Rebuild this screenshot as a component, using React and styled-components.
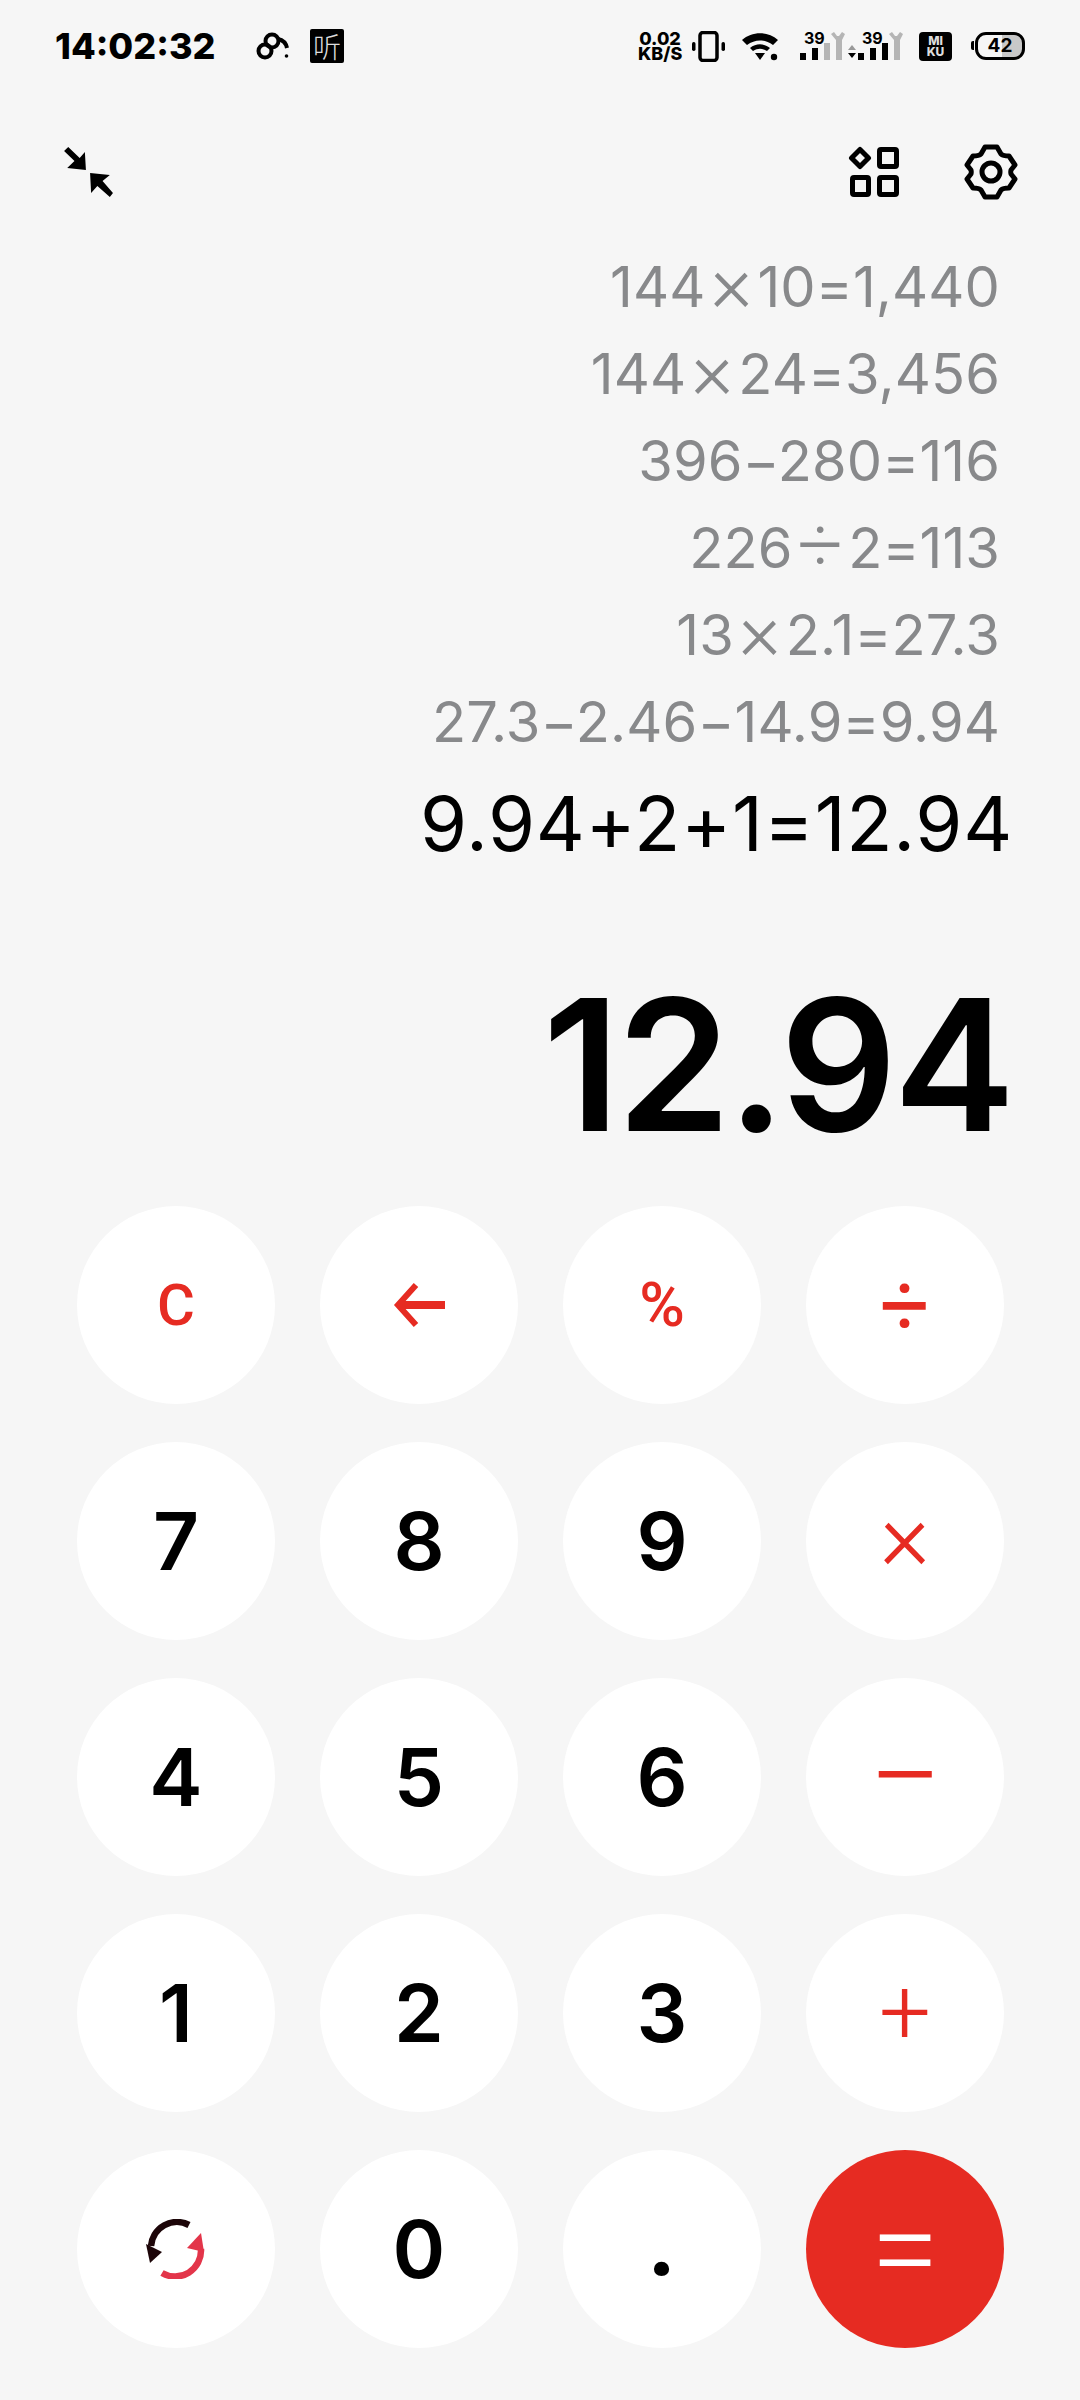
import styled, { createGlobalStyle } from "styled-components";

const RED = "#e62b22";

const GlobalStyle = createGlobalStyle`
  html, body {
    margin: 0;
    padding: 0;
    background: #f6f6f6;
  }
  body {
    font-family: "Inter", "Liberation Sans", sans-serif;
  }
`;

const history = [
  ["144", "×", "10=1,440"],
  ["144", "×", "24=3,456"],
  ["396−280=116"],
  ["226", "÷", "2=113"],
  ["13", "×", "2.1=27.3"],
  ["27.3−2.46−14.9=9.94"],
];

const keys = [
  { label: "C", color: "red", size: 58, weight: 500, roboto: true },
  { icon: "back" },
  { label: "%", color: "red", size: 62, weight: 500, roboto: true },
  { label: "÷", color: "red", size: 88, weight: 400, roboto: true },
  { label: "7" },
  { label: "8" },
  { label: "9" },
  { label: "×", color: "red", size: 96, weight: 350, roboto: true, raise: 10 },
  { label: "4" },
  { label: "5" },
  { label: "6" },
  { label: "−", color: "red", size: 130, weight: 350, roboto: true },
  { label: "1" },
  { label: "2" },
  { label: "3" },
  { label: "+", color: "red", size: 92, weight: 350, roboto: true },
  { icon: "swap" },
  { label: "0" },
  { label: ".", size: 110, weight: 500, roboto: true, raise: 22 },
  { label: "=", color: "white", size: 124, weight: 350, roboto: true, filled: true },
];

function BackArrow() {
  return (
    <svg width="52" height="44" viewBox="0 0 52 44" fill="none">
      <path d="M6 22H52" stroke={RED} strokeWidth="8" />
      <path d="M23 2L5 22L23 42" stroke={RED} strokeWidth="6" />
    </svg>
  );
}

function SwapIcon() {
  return (
    <svg width="60" height="60" viewBox="0 0 60 60" fill="none">
      <path d="M43 6A26 26 0 0 0 5 27" stroke="#1c0508" strokeWidth="6.500" />
      <path d="M0 25L16 33L4 44Z" fill="#1c0508" />
      <path d="M16 54A26 26 0 0 0 55 30" stroke="#e3354a" strokeWidth="6.500" />
      <path d="M55 14L58 33L41 29Z" fill="#e3354a" />
    </svg>
  );
}

function LoopIcon() {
  return (
    <svg width="33" height="28" viewBox="0 0 33 28" fill="none" stroke="#000" strokeWidth="4">
      <circle cx="9" cy="19" r="6.500" />
      <circle cx="16" cy="9" r="6.500" />
      <path d="M22 7C27 8 30 11 31 16" />
      <circle cx="30.500" cy="24" r="1.800" fill="#000" stroke="none" />
    </svg>
  );
}

function VibrateIcon() {
  return (
    <svg width="33" height="31" viewBox="0 0 33 31" fill="none">
      <rect x="8" y="1.500" width="17" height="28" rx="3" stroke="#000" strokeWidth="3.500" />
      <rect x="0" y="11" width="3.500" height="9" rx="1.700" fill="#000" />
      <rect x="29.500" y="11" width="3.500" height="9" rx="1.700" fill="#000" />
    </svg>
  );
}

function WifiIcon() {
  return (
    <svg width="38" height="30" viewBox="0 0 38 30" fill="none">
      <path d="M1 9C11 0 27 0 37 9L32 14C24 8 14 8 6 14Z" fill="#000" />
      <path d="M9 17C15 12 23 12 29 17L26 20C21 17 17 17 12 20Z" fill="#000" />
      <path d="M14 22H24L19 29Z" fill="#000" />
      <circle cx="33" cy="26" r="3.200" fill="#000" />
    </svg>
  );
}

function SignalBars({ third }) {
  return (
    <svg width="46" height="30" viewBox="0 0 46 30">
      <rect x="0" y="22" width="6" height="7" fill="#000" />
      <rect x="12" y="17" width="6" height="12" fill="#000" />
      <rect x="24" y="12" width="6" height="17" fill={third} />
      <path d="M31 3L34 1L37 5H39L42 1L45 3L42 9V29H36V9Z" fill="#b5b5b5" />
    </svg>
  );
}

function CollapseIcon() {
  return (
    <svg width="52" height="52" viewBox="0 0 50 52" preserveAspectRatio="none" fill="#000">
      <path d="M2 5L6 1L17 12L22 6L23 24L5 22L12 15Z" />
      <path d="M27 27L46 29L39 35L49 47L46 51L34 40L28 47Z" />
    </svg>
  );
}

function GridIcon() {
  return (
    <svg width="52" height="52" viewBox="0 0 52 52" fill="none" stroke="#000" strokeWidth="5" strokeLinejoin="round">
      <path d="M12 3.500L20.500 12L12 20.500L3.500 12Z" />
      <rect x="31.500" y="3.500" width="17" height="17" rx="1.500" />
      <rect x="4.500" y="31.500" width="16" height="17" rx="1.500" />
      <rect x="31.500" y="31.500" width="17" height="17" rx="1.500" />
    </svg>
  );
}

function GearIcon() {
  return (
    <svg width="54" height="56" viewBox="0 0 54 56" fill="none" stroke="#000" strokeWidth="5" strokeLinejoin="round">
      <path d="M21 3H33L37 10C39 12 42 12 45 12L51 21L47 26C46.500 28 46.500 28 47 30L51 35L45 44C42 44 39 44 37 46L33 53H21L17 46C15 44 12 44 9 44L3 35L7 30C7.500 28 7.500 28 7 26L3 21L9 12C12 12 15 12 17 10Z" />
      <circle cx="27" cy="28" r="9" />
    </svg>
  );
}

function App() {
  return (
    <Page>
      <GlobalStyle />
      <StatusBar>
        <StatusLeft>
          <Clock>14:02:32</Clock>
          <LoopIcon />
          <ListenBadge>听</ListenBadge>
        </StatusLeft>
        <StatusRight>
          <Speed>
            0.02
            <br />
            KB/S
          </Speed>
          <VibrateSlot>
            <VibrateIcon />
          </VibrateSlot>
          <WifiSlot>
            <WifiIcon />
          </WifiSlot>
          <SignalGroup>
            <Signal>
              <SignalNumber>39</SignalNumber>
              <SignalBars third="#b5b5b5" />
            </Signal>
            <TinyArrows>
              <i />
              <b />
            </TinyArrows>
            <Signal>
              <SignalNumber>39</SignalNumber>
              <SignalBars third="#000" />
            </Signal>
          </SignalGroup>
          <MikuBadge>
            MI
            <br />
            KU
          </MikuBadge>
          <Battery>42</Battery>
        </StatusRight>
      </StatusBar>

      <Toolbar>
        <CollapseIcon />
        <ToolbarRight>
          <GridIcon />
          <GearIcon />
        </ToolbarRight>
      </Toolbar>

      <HistoryList>
        {history.map((line, i) => (
          <HistoryLine key={i}>
            {line.length === 1 ? line[0] : (
              <>
                {line[0]}
                <HistoryOp>{line[1]}</HistoryOp>
                {line[2]}
              </>
            )}
          </HistoryLine>
        ))}
      </HistoryList>
      <CurrentLine>9.94+2+1=12.94</CurrentLine>
      <Result>12.94</Result>

      <Keypad>
        {keys.map((k, i) => (
          <Key
            key={i}
            $color={k.color}
            $size={k.size}
            $weight={k.weight}
            $filled={k.filled}
            $raise={k.raise}
            $roboto={k.roboto}
          >
            {k.icon === "back" && <BackArrow />}
            {k.icon === "swap" && <SwapIcon />}
            {k.label}
          </Key>
        ))}
      </Keypad>
    </Page>
  );
}

const Page = styled.div`
  width: 1080px;
  height: 2400px;
  overflow: hidden;
  background: #f6f6f6;
  display: flex;
  flex-direction: column;
`;

const StatusBar = styled.div`
  height: 92px;
  box-sizing: border-box;
  padding: 0 55px 0 55px;
  display: flex;
  align-items: center;
  justify-content: space-between;
`;

const StatusLeft = styled.div`
  display: flex;
  align-items: center;
  gap: 21px;
`;

const Clock = styled.div`
  font-size: 36px;
  font-weight: 800;
  color: #000;
  width: 180px;
`;

const ListenBadge = styled.div`
  width: 34px;
  height: 34px;
  background: #000;
  border-radius: 2px;
  color: #ddd;
  font-family: "Noto Sans CJK SC", sans-serif;
  font-size: 28px;
  font-weight: 300;
  line-height: 34px;
  text-align: center;
`;

const StatusRight = styled.div`
  display: flex;
  align-items: center;
`;

const Speed = styled.div`
  width: 44px;
  font-size: 18px;
  font-weight: 800;
  line-height: 15px;
  text-align: center;
  color: #000;
`;

const VibrateSlot = styled.div`
  display: flex;
  margin-left: 10px;
`;

const WifiSlot = styled.div`
  display: flex;
  margin-left: 16px;
`;

const SignalGroup = styled.div`
  display: flex;
  align-items: flex-end;
  gap: 2px;
  margin-left: 21px;
`;

const Signal = styled.div`
  position: relative;
  width: 46px;
  height: 30px;
  display: flex;
`;

const SignalNumber = styled.span`
  position: absolute;
  left: 4px;
  top: 0;
  font-size: 16px;
  font-weight: 700;
  line-height: 14px;
  color: #000;
`;

const TinyArrows = styled.div`
  display: flex;
  flex-direction: column;
  gap: 3px;
  padding-bottom: 3px;

  & i, & b {
    display: block;
    width: 0;
    height: 0;
    border-left: 4px solid transparent;
    border-right: 4px solid transparent;
  }
  & i {
    border-bottom: 5px solid #999;
  }
  & b {
    border-top: 5px solid #000;
  }
`;

const MikuBadge = styled.div`
  width: 33px;
  height: 29px;
  margin-left: 15px;
  background: #000;
  border-radius: 4px;
  color: #ddd;
  font-size: 12px;
  font-weight: 800;
  line-height: 11px;
  padding-top: 3px;
  box-sizing: border-box;
  text-align: center;
`;

const Battery = styled.div`
  position: relative;
  width: 50px;
  height: 28px;
  box-sizing: border-box;
  margin-left: 23px;
  border: 3.5px solid #000;
  border-radius: 11px;
  background: linear-gradient(90deg, transparent 55%, #c8c8c8 55%);
  font-size: 19px;
  font-weight: 700;
  line-height: 21px;
  text-align: center;
  color: #000;

  &::before {
    content: "";
    position: absolute;
    left: -7px;
    top: 6px;
    width: 3px;
    height: 9px;
    border-radius: 2px 0 0 2px;
    background: #000;
  }
`;

const Toolbar = styled.div`
  height: 152px;
  box-sizing: border-box;
  padding: 52px 62px 44px 62px;
  display: flex;
  align-items: center;
  justify-content: space-between;
`;

const ToolbarRight = styled.div`
  display: flex;
  gap: 64px;
  align-items: center;
`;

const HistoryList = styled.div`
  display: flex;
  flex-direction: column;
  align-items: flex-end;
  padding-right: 80px;
`;

const HistoryLine = styled.div`
  height: 87px;
  font-size: 56px;
  line-height: 87px;
  letter-spacing: 0.1px;
  color: #88898b;
`;

const HistoryOp = styled.span`
  font-family: "Roboto", sans-serif;
  font-weight: 300;
  font-size: 80px;
  line-height: 0;
  vertical-align: -4px;
  margin: 0 5px;
`;

const CurrentLine = styled.div`
  margin-top: 14px;
  height: 87px;
  padding-right: 67px;
  text-align: right;
  font-size: 76px;
  line-height: 87px;
  letter-spacing: 0.7px;
  color: #000;
`;

const Result = styled.div`
  margin-top: 93px;
  height: 210px;
  padding-right: 68px;
  text-align: right;
  font-size: 183px;
  font-weight: 600;
  line-height: 210px;
  letter-spacing: -3.500px;
  color: #000;
`;

const Keypad = styled.div`
  margin-top: 36px;
  padding: 0 0 0 77px;
  display: grid;
  grid-template-columns: repeat(4, 198px);
  grid-auto-rows: 198px;
  column-gap: 45px;
  row-gap: 38px;
`;

const keyColors = { red: RED, white: "#fff" };

const Key = styled.div`
  width: 198px;
  height: 198px;
  box-sizing: border-box;
  border-radius: 50%;
  background: ${({ $filled }) => ($filled ? RED : "#fff")};
  color: ${({ $color }) => keyColors[$color] || "#000"};
  font-family: ${({ $roboto }) => ($roboto ? '"Roboto", sans-serif' : '"Inter", sans-serif')};
  font-size: ${({ $size }) => $size || 80}px;
  font-weight: ${({ $weight }) => $weight || 600};
  line-height: 1;
  padding-bottom: ${({ $raise }) => $raise || 0}px;
  display: flex;
  align-items: center;
  justify-content: center;
`;

export default App;
